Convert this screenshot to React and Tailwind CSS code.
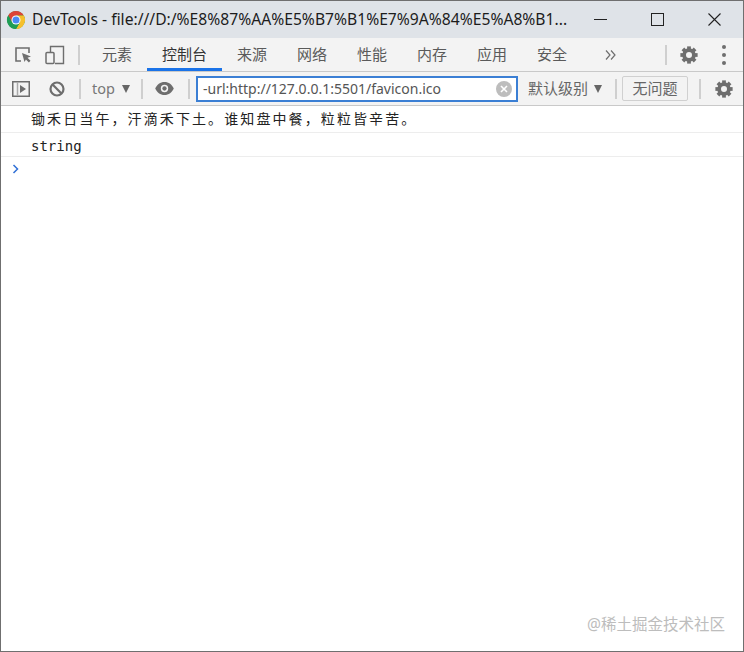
const sans = "font-['Noto_Sans','Noto_Sans_CJK_SC',sans-serif]";

const tabs = [
  { label: "元素", w: "w-[60px]" },
  { label: "控制台", w: "w-[75px]", active: true },
  { label: "来源", w: "w-[60px]" },
  { label: "网络", w: "w-[60px]" },
  { label: "性能", w: "w-[60px]" },
  { label: "内存", w: "w-[60px]" },
  { label: "应用", w: "w-[60px]" },
  { label: "安全", w: "w-[60px]" },
];

function ChromeLogo() {
  const slice = "M2.200 5.500A9 9 0 0 1 17.800 5.500L10 5.500L6.100 12.250z";
  return (
    <svg width="20" height="20" viewBox="0 0 20 20">
      <circle cx="10" cy="10" r="9" fill="#1f9d55" />
      <path d={slice} fill="#dd4437" />
      <path d={slice} fill="#f6c02c" transform="rotate(120 10 10)" />
      <path d={slice} fill="#1f9d55" transform="rotate(240 10 10)" />
      <circle cx="10" cy="10" r="4.500" fill="#fff" />
      <circle cx="10" cy="10" r="3.500" fill="#4a8af4" />
    </svg>
  );
}

function Gear({ size = 18 }) {
  return (
    <svg width={size} height={size} viewBox="0 0 24 24">
      <circle cx="12" cy="12" r="6.500" fill="none" stroke="#6e6e6e" strokeWidth="5" />
      {[0, 45, 90, 135, 180, 225, 270, 315].map((deg) => (
        <rect key={deg} x="9.500" y="0.500" width="5" height="6" fill="#6e6e6e" transform={`rotate(${deg} 12 12)`} />
      ))}
    </svg>
  );
}

function Divider({ className }) {
  return <div className={`w-[2px] h-[20px] bg-[#cfcfcf] shrink-0 ${className}`} />;
}

function Caret({ className }) {
  return <div className={`w-0 h-0 border-x-[4.5px] border-x-transparent border-t-[8px] border-t-[#666] ${className}`} />;
}

export default function App() {
  return (
    <div className={`w-[744px] h-[652px] flex flex-col bg-white border border-[#6f6f6f] overflow-hidden ${sans}`}>
      {/* title bar */}
      <div className="h-[37px] shrink-0 flex items-center bg-[#dfe3e8]">
        <div className="ml-[5px] mr-[6px]">
          <ChromeLogo />
        </div>
        <span className="text-[15.670px] text-[#1c1c1c] whitespace-nowrap">
          DevTools - file:///D:/%E8%87%AA%E5%B7%B1%E7%9A%84%E5%A8%B1...
        </span>
        <div className="ml-auto flex items-center">
          <div className="w-[13px] h-[1px] bg-[#222] mr-[44px]" />
          <div className="w-[13px] h-[13px] border border-[#222] mr-[44px]" />
          <svg width="13" height="13" viewBox="0 0 13 13" className="mr-[22px]">
            <path d="M0.500 0.500l12 12M12.500 0.500l-12 12" stroke="#222" strokeWidth="1.100" />
          </svg>
        </div>
      </div>

      {/* tabs */}
      <div className="h-[34px] shrink-0 flex items-center bg-[#f3f3f3] border-b border-[#c9c9c9]">
        <svg width="18" height="18" viewBox="0 0 18 18" className="ml-[13px]">
          <path d="M7 15H2V2h13v5" fill="none" stroke="#6e6e6e" strokeWidth="1.600" />
          <path d="M8 7l9 3.500-3.500 1.300 3 3-1.600 1.600-3-3L10.500 16z" fill="#6e6e6e" />
        </svg>
        <svg width="20" height="20" viewBox="0 0 20 20" className="ml-[13px]">
          <path d="M5.500 7V1.500h13v17H10" fill="none" stroke="#6e6e6e" strokeWidth="1.400" />
          <rect x="1" y="7.500" width="8" height="11" rx="1" fill="none" stroke="#6e6e6e" strokeWidth="1.500" />
        </svg>
        <Divider className="ml-[13px]" />
        <div className="flex h-full ml-[7px]">
          {tabs.map((tab) => (
            <div
              key={tab.label}
              className={`${tab.w} flex items-center justify-center text-[15px] text-[#5a5a5a] ${
                tab.active ? "border-b-[3px] border-[#1a73e8] text-[#333] pt-[3px]" : ""
              }`}
            >
              {tab.label}
            </div>
          ))}
        </div>
        <svg width="11" height="10" viewBox="0 0 11 10" className="ml-[23px]">
          <path d="M1 0.500l4 4.500-4 4.500M6 0.500l4 4.500-4 4.500" fill="none" stroke="#6e6e6e" strokeWidth="1.200" />
        </svg>
        <Divider className="ml-[49px]" />
        <div className="ml-[13px] flex">
          <Gear />
        </div>
        <div className="ml-[24px] flex flex-col gap-[4px]">
          <div className="w-[4px] h-[4px] rounded-full bg-[#6e6e6e]" />
          <div className="w-[4px] h-[4px] rounded-full bg-[#6e6e6e]" />
          <div className="w-[4px] h-[4px] rounded-full bg-[#6e6e6e]" />
        </div>
      </div>

      {/* console toolbar */}
      <div className="h-[34px] shrink-0 flex items-center bg-[#f3f3f3] border-b border-[#c9c9c9]">
        <svg width="18" height="16" viewBox="0 0 18 16" className="ml-[11px]">
          <rect x="0.750" y="0.750" width="16.500" height="14.500" fill="none" stroke="#6e6e6e" strokeWidth="1.500" />
          <path d="M5.500 1v14" stroke="#aaa" strokeWidth="1.500" />
          <path d="M8 4l6 4-6 4z" fill="#6e6e6e" />
        </svg>
        <svg width="16" height="16" viewBox="0 0 16 16" className="ml-[19px]">
          <circle cx="8" cy="8" r="6.500" fill="none" stroke="#6e6e6e" strokeWidth="2.200" />
          <path d="M3.300 3.300l9.400 9.400" stroke="#6e6e6e" strokeWidth="2.200" />
        </svg>
        <Divider className="ml-[14px]" />
        <span className="ml-[11px] w-[22px] text-[14.500px] text-[#777]">top</span>
        <Caret className="ml-[8px]" />
        <Divider className="ml-[11px]" />
        <svg width="19" height="13" viewBox="0 0 20 14" className="ml-[12px]">
          <path
            fillRule="evenodd"
            fill="#6e6e6e"
            d="M10 0c4.500 0 8.300 2.900 10 7-1.700 4.100-5.500 7-10 7S1.700 11.100 0 7c1.700-4.100 5.500-7 10-7zm0 3a4 4 0 1 0 0 8 4 4 0 0 0 0-8z"
          />
          <circle cx="10" cy="7" r="2.300" fill="#6e6e6e" />
        </svg>
        <Divider className="ml-[14px]" />
        <div className="ml-[6px] w-[322px] h-[26px] flex items-center border-2 border-[#3b7fd4] bg-white pl-[5px]">
          <span className="text-[14px] text-[#555] whitespace-nowrap">-url:http://127.0.0.1:5501/favicon.ico</span>
          <div className="ml-auto mr-[4px] w-[16px] h-[16px] rounded-full bg-[#bdbdbd] flex items-center justify-center">
            <svg width="8" height="8" viewBox="0 0 8 8">
              <path d="M1 1l6 6M7 1L1 7" stroke="#fff" strokeWidth="1.600" />
            </svg>
          </div>
        </div>
        <span className="ml-[10px] w-[60px] text-[15px] text-[#666] whitespace-nowrap">默认级别</span>
        <Caret className="ml-[6px]" />
        <Divider className="ml-[13px]" />
        <div className="ml-[5px] w-[66px] h-[25px] flex items-center justify-center border border-[#d0d0d0] rounded-[2px] text-[15px] text-[#666]">
          无问题
        </div>
        <Divider className="ml-[11px]" />
        <div className="ml-[14px] flex">
          <Gear />
        </div>
      </div>

      {/* console output */}
      <div className="flex-1 relative">
        <div className="h-[27px] flex items-center pl-[30px] pt-[1px] border-b border-[#ededed] font-['DejaVu_Sans_Mono','Noto_Sans_CJK_SC',monospace] text-[14px] tracking-[2.100px] text-[#222]">
          锄禾日当午，汗滴禾下土。谁知盘中餐，粒粒皆辛苦。
        </div>
        <div className="h-[24px] flex items-center pl-[30px] pt-[3px] border-b border-[#ededed] font-['DejaVu_Sans_Mono',monospace] text-[14px] text-[#222]">
          string
        </div>
        <svg width="8" height="10" viewBox="0 0 8 10" className="ml-[11px] mt-[7px]">
          <path d="M1.500 1l4 4-4 4" fill="none" stroke="#2f6fd6" strokeWidth="1.500" />
        </svg>
        <span className="absolute right-[18px] bottom-[15px] text-[15.500px] text-[#bdbdbd] whitespace-nowrap">
          @稀土掘金技术社区
        </span>
      </div>
    </div>
  );
}
